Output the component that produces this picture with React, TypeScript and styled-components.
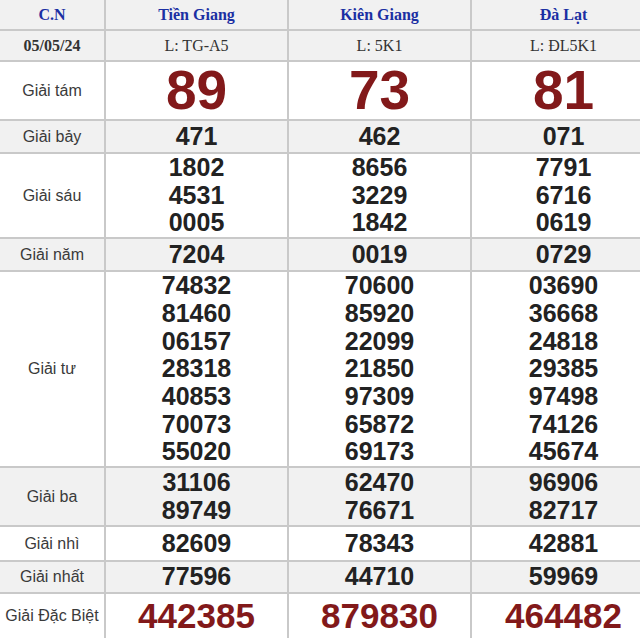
import styled, { createGlobalStyle } from 'styled-components'

const GlobalStyle = createGlobalStyle`
	html, body {
		margin: 0;
		padding: 0;
		background: #fff;
		overflow: hidden;
	}
`

type Prize = {
	label: string
	height: number
	size?: 'big' | 'special'
	values: string[][]
}

const provinces = [
	{ name: 'Tiền Giang', code: 'L: TG-A5' },
	{ name: 'Kiên Giang', code: 'L: 5K1' },
	{ name: 'Đà Lạt', code: 'L: ĐL5K1' }
]

const prizes: Prize[] = [
	{ label: 'Giải tám', height: 59, size: 'big', values: [['89'], ['73'], ['81']] },
	{ label: 'Giải bảy', height: 33, values: [['471'], ['462'], ['071']] },
	{
		label: 'Giải sáu', height: 85,
		values: [['1802', '4531', '0005'], ['8656', '3229', '1842'], ['7791', '6716', '0619']]
	},
	{ label: 'Giải năm', height: 33, values: [['7204'], ['0019'], ['0729']] },
	{
		label: 'Giải tư', height: 195,
		values: [
			['74832', '81460', '06157', '28318', '40853', '70073', '55020'],
			['70600', '85920', '22099', '21850', '97309', '65872', '69173'],
			['03690', '36668', '24818', '29385', '97498', '74126', '45674']
		]
	},
	{ label: 'Giải ba', height: 59, values: [['31106', '89749'], ['62470', '76671'], ['96906', '82717']] },
	{ label: 'Giải nhì', height: 35, values: [['82609'], ['78343'], ['42881']] },
	{ label: 'Giải nhất', height: 32, values: [['77596'], ['44710'], ['59969']] },
	{ label: 'Giải Đặc Biệt', height: 46, size: 'special', values: [['442385'], ['879830'], ['464482']] }
]

export default function App () {
	return (
		<>
			<GlobalStyle />
			<Table>
				<colgroup>
					<col style={{ width: 105 }} />
					<col style={{ width: 183 }} />
					<col style={{ width: 183 }} />
					<col style={{ width: 185 }} />
				</colgroup>
				<tbody>
					<Row $shade $height={30}>
						<HeadCell>C.N</HeadCell>
						{provinces.map(p => <HeadCell key={p.name}>{p.name}</HeadCell>)}
					</Row>
					<Row $shade $height={31}>
						<DateCell>05/05/24</DateCell>
						{provinces.map(p => <CodeCell key={p.code}>{p.code}</CodeCell>)}
					</Row>
					{prizes.map((prize, i) => (
						<Row key={prize.label} $shade={i % 2 === 1} $height={prize.height}>
							<LabelCell>{prize.label}</LabelCell>
							{prize.values.map((list, j) => (
								<NumberCell key={j} $size={prize.size}>
									{list.map(v => <div key={v}>{v}</div>)}
								</NumberCell>
							))}
						</Row>
					))}
				</tbody>
			</Table>
		</>
	)
}

const Table = styled.table`
	width: 656px;
	table-layout: fixed;
	border-collapse: collapse;
	td {
		border: 2px solid #c9c9c9;
		padding: 0;
		text-align: center;
		vertical-align: middle;
	}
	tr:first-child td {
		border-top: none;
	}
	td:first-child {
		border-left: none;
	}
`

const Row = styled.tr<{ $shade?: boolean, $height: number }>`
	background: ${p => p.$shade ? '#f1f1f1' : '#fff'};
	height: ${p => p.$height}px;
`

const HeadCell = styled.td`
	font-family: "Liberation Serif", "Times New Roman", serif;
	font-weight: 700;
	font-size: 16px;
	color: #1b2fa3;
`

const DateCell = styled.td`
	font-family: "Liberation Serif", "Times New Roman", serif;
	font-weight: 700;
	font-size: 16px;
	color: #333;
`

const CodeCell = styled.td`
	font-family: "Liberation Serif", "Times New Roman", serif;
	font-size: 16px;
	color: #333;
`

const LabelCell = styled.td`
	font-family: "Liberation Sans", Arial, sans-serif;
	font-size: 16px;
	color: #3a3a3a;
	white-space: nowrap;
`

const NumberCell = styled.td<{ $size?: 'big' | 'special' }>`
	font-family: "Liberation Sans", Arial, sans-serif;
	font-weight: 700;
	font-size: ${p => p.$size === 'big' ? '55px' : p.$size === 'special' ? '35px' : '25px'};
	line-height: ${p => p.$size === 'big' ? '57px' : p.$size === 'special' ? '44px' : '27.7px'};
	color: ${p => p.$size ? '#82191a' : '#222'};
`
